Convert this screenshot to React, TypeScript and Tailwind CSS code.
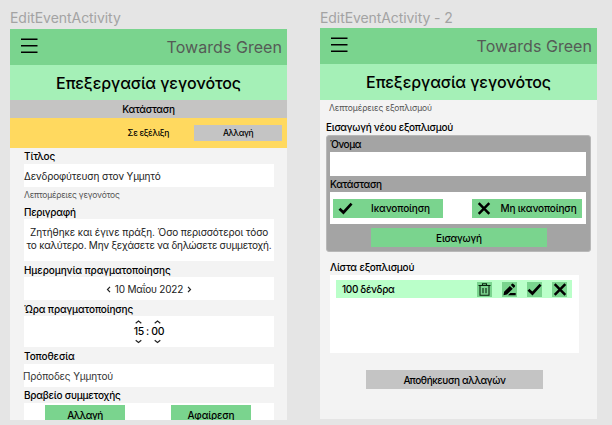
import type { ReactNode } from 'react';

function Label({ children, className = 'tracking-[-0.2px]' }: { children: ReactNode; className?: string }) {
  return <div className={`flex items-center whitespace-nowrap text-[10px] leading-none font-medium text-black ${className}`}>{children}</div>;
}

function Button({ children, className = '' }: { children: ReactNode; className?: string }) {
  return (
    <button className={`flex shrink-0 items-center justify-center whitespace-nowrap leading-none font-medium text-black ${className}`}>
      {children}
    </button>
  );
}

function Check({ className }: { className: string }) {
  return (
    <svg className={className} viewBox="0 0 16 14" fill="none" stroke="#000" strokeWidth="2.9">
      <path d="M1.5 7.2 5.8 11.3 14.5 1.8" />
    </svg>
  );
}

function Cross({ className }: { className: string }) {
  return (
    <svg className={className} viewBox="0 0 14 14" fill="none" stroke="#000" strokeWidth="2.7">
      <path d="M1.3 1.3 12.7 12.7M12.7 1.3 1.3 12.7" />
    </svg>
  );
}

function Trash() {
  return (
    <svg className="h-[13px] w-[13px]" viewBox="0 0 13 13" fill="none" stroke="#08220e" strokeWidth="1.1">
      <path d="M0.5 2.5H12.5M4.5 2.2V0.7H8.5V2.2M2 2.7V12.3H11V2.7M5 5V10.3M8 5V10.3" />
    </svg>
  );
}

function Pencil() {
  return (
    <svg className="h-[13px] w-[13px]" viewBox="0 0 13 13" fill="#000">
      <path d="M0.5 12.3 1.1 8.7 6.9 2.9 9.8 5.8 4 11.6ZM7.8 2 9 .8Q9.7.3 10.4.9L11.8 2.3Q12.4 3 11.8 3.7L10.7 4.9ZM7.3 10H12.7V12.3H5Z" />
    </svg>
  );
}

function Chevron({ d }: { d: string }) {
  return (
    <svg className="h-[7px] w-[7px]" viewBox="0 0 7 7" fill="none" stroke="#222" strokeWidth="1.2">
      <path d={d} />
    </svg>
  );
}

function Header() {
  return (
    <>
      <div className="flex h-9 shrink-0 items-center justify-between bg-[#7ad48e] pr-[5px] pl-[11px]">
        <svg className="mb-[2px] h-4 w-[17px]" viewBox="0 0 17 16" stroke="#000" strokeWidth="1.5">
          <path d="M0 1.2H16.5M0 7.7H16.5M0 14.2H16.5" />
        </svg>
        <span className="text-[16px] leading-none tracking-[0.05px] whitespace-nowrap text-[#555b56]">Towards Green</span>
      </div>
      <div className="flex h-9 shrink-0 items-center justify-center bg-[#a5f0b7]">
        <h1 className="text-[16px] leading-none font-medium tracking-[-0.1px] whitespace-nowrap text-black">Επεξεργασία γεγονότος</h1>
      </div>
    </>
  );
}

function TimePart({ value }: { value: string }) {
  return (
    <div className="flex flex-col items-center text-[10.5px] leading-[12px] font-medium tracking-[-0.3px]">
      <Chevron d="M.7 4.3 3.5 2.1 6.3 4.3" />
      {value}
      <Chevron d="M.7 2.2 3.5 4.4 6.3 2.2" />
    </div>
  );
}

function EventFrame() {
  return (
    <section className="w-[277px]">
      <h2 className="h-[18px] text-[14px] leading-[13px] tracking-[-0.05px] whitespace-nowrap text-[#a3a3a3]">EditEventActivity</h2>
      <div className="flex h-[391px] flex-col overflow-hidden bg-[#f3f3f3]">
        <Header />
        <div className="-mt-px flex h-[18px] shrink-0 items-center justify-center bg-[#c5c4c3] pt-px text-[10px] font-medium tracking-[-0.25px]">Κατάσταση</div>
        <div className="flex h-[30px] shrink-0 items-center justify-end bg-[#ffd95f] pr-[5px]">
          <span className="mr-[25px] text-[8.5px] font-medium tracking-[-0.32px]">Σε εξέλιξη</span>
          <Button className="h-4 w-[88px] bg-[#c4c4c4] text-[8.5px] tracking-[-0.45px]">Αλλαγή</Button>
        </div>
        <div className="flex flex-col pr-[13px] pl-[14px]">
          <Label className="h-4 tracking-[-0.1px]">Τίτλος</Label>
          <div className="flex h-[23px] items-center bg-white pt-px text-[10px] tracking-[-0.16px] whitespace-nowrap text-[#222]">Δενδροφύτευση στον Υμμητό</div>
          <div className="flex h-[17px] items-center text-[8.5px] tracking-[-0.22px] text-[#555]">Λεπτομέρειες γεγονότος</div>
          <Label className="h-[15px] pt-px tracking-[-0.27px]">Περιγραφή</Label>
          <div className="flex h-[42px] flex-col items-center justify-center bg-white pb-[3px] text-[10px] leading-[13px] whitespace-nowrap text-[#222]">
            <span className="tracking-[-0.08px]">Ζητήθηκε και έγινε πράξη. Όσο περισσότεροι τόσο</span>
            <span className="tracking-[-0.24px]">το καλύτερο. Μην ξεχάσετε να δηλώσετε συμμετοχή.</span>
          </div>
          <Label className="h-4 pt-px tracking-[-0.08px]">Ημερομηνία πραγματοποίησης</Label>
          <div className="flex h-[23px] items-center justify-center gap-[3px] bg-white pt-[2px] text-[10px] tracking-[-0.2px] text-[#222]">
            <Chevron d="M5 .9 2.5 3.5 5 6.1" />
            10 Μαΐου 2022
            <Chevron d="M2 .9 4.5 3.5 2 6.1" />
          </div>
          <Label className="h-4 pt-px tracking-[-0.15px]">Ώρα πραγματοποίησης</Label>
          <div className="flex h-[31px] items-center justify-center gap-[2px] bg-white text-[11px]">
            <TimePart value="15" />
            <span>:</span>
            <TimePart value="00" />
          </div>
          <Label className="h-[17px] pt-px tracking-[-0.1px]">Τοποθεσία</Label>
          <div className="flex h-[23px] items-center bg-white pt-px text-[10px] tracking-[-0.12px] text-[#333]">
            <span className="-ml-px">Πρόποδες Υμμητού</span>
          </div>
          <Label className="h-4 tracking-[-0.22px]">Βραβείο συμμετοχής</Label>
          <div className="flex h-[23px] items-start gap-[46px] bg-white pt-[2px] pl-[21px]">
            <Button className="h-[19px] w-20 bg-[#7ad48e] text-[10px] tracking-[-0.5px]">Αλλαγή</Button>
            <Button className="h-[19px] w-20 bg-[#7ad48e] text-[10px] tracking-[-0.15px]">Αφαίρεση</Button>
          </div>
        </div>
      </div>
    </section>
  );
}

function EquipmentFrame() {
  return (
    <section className="w-[277px]">
      <h2 className="h-[18px] text-[14px] leading-[13px] tracking-[-0.08px] whitespace-nowrap text-[#a3a3a3]">EditEventActivity - 2</h2>
      <div className="-mt-px flex h-[391px] flex-col overflow-hidden bg-[#f3f3f3]">
        <Header />
        <div className="flex h-[17px] items-center pl-[9px] text-[8.5px] tracking-[-0.1px] text-[#555]">Λεπτομέρειες εξοπλισμού</div>
        <Label className="h-[18px] pt-px pl-[6px] tracking-[-0.25px]">Εισαγωγή νέου εξοπλισμού</Label>
        <div className="ml-[6px] flex h-[117px] w-[265px] shrink-0 flex-col rounded-[3px] border border-[#b8b8b8] bg-[#a4a4a4] px-[3px]">
          <Label className="h-4 tracking-[-0.5px]">Όνομα</Label>
          <div className="h-6 w-64 bg-white" />
          <Label className="h-4 tracking-[-0.35px]">Κατάσταση</Label>
          <div className="flex h-8 w-64 items-center justify-between bg-white pr-1 pl-[3px]">
            <Button className="h-[19px] w-[110px] bg-[#7ad48e] text-[10px] tracking-[-0.13px]">
              <Check className="mr-[18px] -ml-[8px] h-[13px] w-[15px]" />
              Ικανοποίηση
            </Button>
            <Button className="h-[19px] w-[110px] bg-[#7ad48e] text-[10px] tracking-[-0.15px]">
              <Cross className="mr-[9px] h-[13px] w-[14px]" />
              Μη ικανοποίηση
            </Button>
          </div>
          <Button className="mt-1 ml-[41px] h-[19px] w-44 bg-[#7ad48e] pt-px text-[10px] tracking-[-0.2px]">Εισαγωγή</Button>
        </div>
        <Label className="mt-[7px] h-4 shrink-0 pl-[10px] tracking-[-0.18px]">Λίστα εξοπλισμού</Label>
        <div className="ml-[10px] h-[78px] w-[249px] shrink-0 bg-white pt-[5px] pl-[6px]">
          <div className="flex h-[18px] w-[236px] items-center justify-between bg-[#baffc9] pr-[5px] pl-[6px] text-[10px] font-medium tracking-[-0.35px]">
            <span className="pt-px">100 δένδρα</span>
            <div className="flex gap-[10px]">
              <div className="flex h-[15px] w-[15px] items-center justify-center bg-[#7ad48e]"><Trash /></div>
              <div className="flex h-[15px] w-[15px] items-center justify-center bg-[#7ad48e]"><Pencil /></div>
              <div className="flex h-[15px] w-[15px] items-center justify-center bg-[#7ad48e]"><Check className="h-[13px] w-[15px]" /></div>
              <div className="flex h-[15px] w-[15px] items-center justify-center bg-[#7ad48e]"><Cross className="h-[13px] w-[14px]" /></div>
            </div>
          </div>
        </div>
        <Button className="mt-[17px] ml-[46px] h-[19px] w-[177px] bg-[#c4c4c4] pt-px text-[10px] tracking-[-0.4px]">Αποθήκευση αλλαγών</Button>
      </div>
    </section>
  );
}

export default function App() {
  return (
    <main className="flex h-[425px] w-[612px] items-start gap-[33px] overflow-hidden bg-[#e5e5e5] pt-[11px] pl-[10px] font-['Inter',sans-serif]">
      <EventFrame />
      <EquipmentFrame />
    </main>
  );
}
